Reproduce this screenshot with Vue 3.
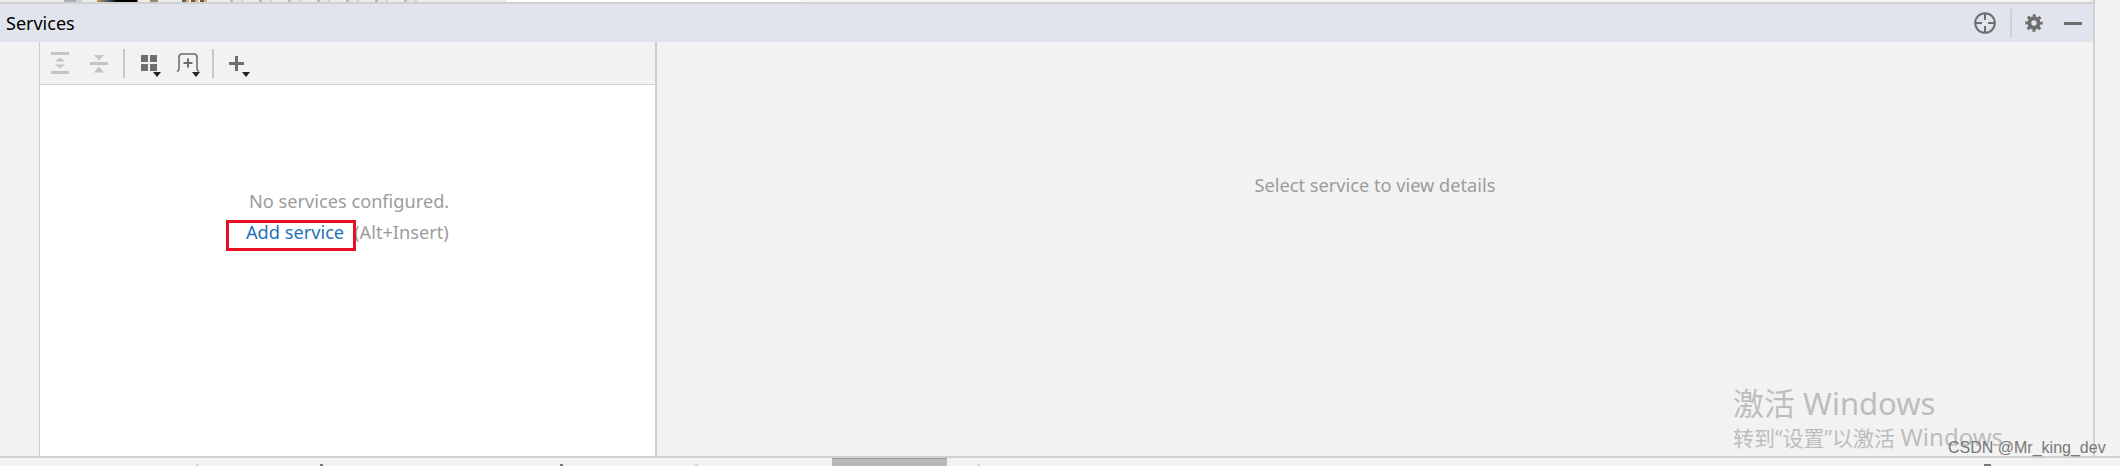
<template>
  <div class="screen">
    <div class="upper">
      <div class="main">
        <!-- обрезанная полоска сверху -->
        <div class="top-strip">
          <span class="frag frag-a"></span>
          <span class="frag frag-b"></span>
          <span class="frag frag-c"></span>
          <span class="frag frag-d"></span>
          <span class="frag frag-e"></span>
          <span class="frag frag-f"></span>
          <span class="frag frag-g"></span>
        </div>

        <header class="title-bar">
          <span class="title">Services</span>
          <div class="title-actions">
            <svg width="22" height="22" viewBox="0 0 22 22" fill="none" stroke="#6e6e6e" stroke-width="2">
              <circle cx="11" cy="11" r="9.800" />
              <path d="M11 1v7M11 14v7M1 11h7M14 11h7" />
            </svg>
            <span class="tb-sep"></span>
            <svg width="18" height="18" viewBox="0 0 20 20" fill="none" stroke="#6e6e6e">
              <circle cx="10" cy="10" r="5.200" stroke-width="4.400" />
              <circle cx="10" cy="10" r="8" stroke-width="3.600" stroke-dasharray="3.140 3.143" stroke-dashoffset="1.570" />
            </svg>
            <span class="tb-dash"></span>
          </div>
        </header>

        <main class="body">
          <div class="side-strip"></div>

          <section class="left-panel">
            <div class="toolbar">
              <svg width="18" height="22" viewBox="0 0 18 22" fill="#c4c4c4">
                <rect width="18" height="3" />
                <rect y="19" width="18" height="3" />
                <path d="M9 5.500l5 4H4zM9 16.500l-5-4h10z" />
              </svg>
              <svg class="t2" width="18" height="19" viewBox="0 0 18 19" fill="#c4c4c4">
                <rect y="8" width="18" height="3" />
                <path d="M9 6.500L4 1h10zM9 12.500l5 6H4z" />
              </svg>
              <span class="tool-sep"></span>
              <span class="tool-wrap t3">
                <svg width="16" height="16" viewBox="0 0 16 16" fill="#6e6e6e">
                  <rect width="7" height="7" />
                  <rect x="9" width="7" height="7" />
                  <rect y="9" width="7" height="7" />
                  <rect x="9" y="9" width="7" height="7" />
                </svg>
                <i class="caret"></i>
              </span>
              <span class="tool-wrap t4">
                <svg width="24" height="20" viewBox="0 0 24 20" fill="none" stroke="#6e6e6e" stroke-width="1.600">
                  <path d="M1 18.500c1.400-.5 2-1.200 2-2.500V4c0-2 1-3 3-3h12c2 0 3 1 3 3v12c0 1.300.6 2 2 2.500" />
                  <path d="M12 5.500v9M7.500 10h9" stroke-width="2" />
                </svg>
                <i class="caret"></i>
              </span>
              <span class="tool-sep s2"></span>
              <span class="tool-wrap t5">
                <svg width="15" height="15" viewBox="0 0 15 15" fill="#6e6e6e">
                  <rect x="6" width="3" height="15" />
                  <rect y="6" width="15" height="3" />
                </svg>
                <i class="caret"></i>
              </span>
            </div>

            <div class="left-content">
              <p class="empty first">No services configured.</p>
              <p class="empty second">
                <a class="link" href="#" @click.prevent>Add service</a>
                <span class="hint">(Alt+Insert)</span>
                <span class="red-box"></span>
              </p>
            </div>
          </section>

          <section class="right-panel">
            <p class="details">Select service to view details</p>
          </section>
        </main>
      </div>

      <div class="right-strip"></div>
    </div>

    <footer class="bottom-strip">
      <span class="speck sp1"></span>
      <span class="speck dark sp2"></span>
      <span class="speck dark sp3"></span>
      <span class="speck sp4"></span>
      <span class="bottom-tab"></span>
      <span class="speck sp5"></span>
      <span class="speck dark sp6"></span>
    </footer>

    <!-- водяные знаки поверх всего -->
    <div class="activate">
      <div class="activate-title">激活 Windows</div>
      <div class="activate-sub">转到“设置”以激活 <span class="win">Windows</span></div>
    </div>
    <div class="mark">CSDN @Mr_king_dev</div>
  </div>
</template>

<script setup>
</script>

<style>
html, body {
  margin: 0;
  background: #f2f2f2;
}
</style>

<style scoped>
.screen {
  position: relative;
  width: 2120px;
  height: 466px;
  display: flex;
  flex-direction: column;
  overflow: hidden;
  background: #f2f2f2;
  font-family: "Noto Sans", "Open Sans", "Noto Sans CJK SC", sans-serif;
}

.upper {
  height: 456px;
  flex: none;
  display: flex;
}

.main {
  width: 2093px;
  flex: none;
  display: flex;
  flex-direction: column;
}

.top-strip {
  height: 2px;
  display: flex;
  flex: none;
  background: #ececec;
}

.frag { display: block; height: 2px; flex: none; }
.frag-a { width: 18px; margin-left: 64px; background: linear-gradient(90deg, #a9b1b5 66%, #bcd6e2 66%); }
.frag-b { width: 41px; margin-left: 15px; background: linear-gradient(90deg, #c69a5a, #3c4a66 30%, #000 50%, #000 96%, #c69a5a); }
.frag-c { width: 8px; margin-left: 12px; background: #9a8a70; }
.frag-d { width: 26px; margin-left: 24px; background: repeating-linear-gradient(90deg, #6a5a48 0 4px, #e3b070 4px 7px, #f2f2f2 7px 9px); }
.frag-e { width: 187px; margin-left: 22px; background: repeating-linear-gradient(90deg, #b9bcbf 0 3px, #e6e6e6 3px 11px, #d6d0c8 11px 13px, #ececec 13px 29px); }
/* дальше полоска почти белая */
.frag-f { width: 296px; margin-left: 89px; background: #fdfdfb; }
.frag-g { width: 1288px; background: #f6f6f4; }

.title-bar {
  height: 38px;
  flex: none;
  box-sizing: content-box;
  border-top: 2px solid #d1d1d1;
  background: #e1e4ec;
  display: flex;
  align-items: center;
  justify-content: space-between;
}

.title {
  margin-left: 6px;
  font-size: 18px;
  color: #000;
}

.title-actions {
  margin-right: 11px;
  display: flex;
  align-items: center;
}

.tb-sep {
  width: 2px;
  height: 29px;
  margin: 0 13px 0 14px;
  background: #cfd1d6;
}

.tb-dash {
  width: 18px;
  height: 3px;
  margin-left: 21px;
  background: #6e6e6e;
}

.body {
  flex: 1;
  display: flex;
  min-height: 0;
}

.side-strip {
  width: 39px;
  flex: none;
  border-right: 1px solid #d1d1d1;
}

.left-panel {
  width: 615px;
  flex: none;
  display: flex;
  flex-direction: column;
  border-right: 2px solid #d1d1d1;
}

.toolbar {
  height: 43px;
  flex: none;
  box-sizing: border-box;
  border-bottom: 1px solid #d1d1d1;
  display: flex;
  align-items: center;
  padding-left: 11px;
}

.t2 { margin-left: 21px; }

.tool-sep {
  width: 2px;
  height: 29px;
  margin-left: 15px;
  background: #c8c8c8;
}

.tool-wrap {
  position: relative;
  display: flex;
}

.t3 { margin-left: 16px; }
.t4 { margin-left: 19px; }
.t5 { margin-left: 15px; }
.s2 { margin-left: 12px; }

.caret {
  position: absolute;
  right: -4px;
  bottom: -6px;
  width: 0;
  height: 0;
  border-left: 4px solid transparent;
  border-right: 4px solid transparent;
  border-top: 5px solid #222;
}

.t4 .caret { right: 0; bottom: -4px; }
.t5 .caret { right: -6px; bottom: -6px; }

.left-content {
  flex: 1;
  background: #fff;
  padding-top: 101px;
}

.empty {
  margin: 0;
  font-size: 18.200px;
  line-height: 31px;
  color: #9c9c9c;
  white-space: nowrap;
}

.first {
  padding-left: 209px;
}

.second {
  position: relative;
  display: flex;
  padding-left: 206px;
}

.link {
  color: #1f72b8;
  text-decoration: none;
}

.hint {
  margin-left: 10px;
}

.red-box {
  position: absolute;
  left: 186px;
  top: 3px;
  width: 130px;
  height: 31px;
  box-sizing: border-box;
  border: 3px solid #e81123;
}

.right-panel {
  flex: 1;
  text-align: center;
}

.details {
  margin: 0;
  padding-top: 131px;
  font-size: 18.200px;
  line-height: 24px;
  color: #9c9c9c;
}

.activate {
  position: absolute;
  left: 1733px;
  top: 383px;
  color: #bdbdbd;
  white-space: nowrap;
}

.activate-title {
  font-size: 31px;
  line-height: 40px;
}

.activate-sub {
  font-size: 21px;
  line-height: 28px;
}

.win {
  font-size: 24px;
}

.mark {
  position: absolute;
  left: 1948px;
  top: 438px;
  font-family: "Liberation Sans", Arial, sans-serif;
  font-size: 16px;
  line-height: 20px;
  color: #777;
  white-space: nowrap;
}

.right-strip {
  width: 25px;
  flex: none;
  border-left: 2px solid #d1d1d1;
}

.bottom-strip {
  height: 10px;
  flex: none;
  border-top: 2px solid #d1d1d1;
  box-sizing: border-box;
  display: flex;
  align-items: flex-end;
}

.speck {
  width: 3px;
  height: 2px;
  flex: none;
  background: #d8d8d8;
}

.speck.dark { background: #777; }

.sp1 { margin-left: 196px; }
.sp2 { margin-left: 121px; }
.sp3 { margin-left: 237px; }
.sp4 { margin-left: 132px; }
.sp5 { margin-left: 30px; }
.sp6 { margin-left: 1004px; width: 7px; }

.bottom-tab {
  display: block;
  width: 115px;
  height: 8px;
  flex: none;
  margin-left: 134px;
  box-sizing: border-box;
  border-top: 1px solid #9e9e9e;
  background: #bababa;
}
</style>
